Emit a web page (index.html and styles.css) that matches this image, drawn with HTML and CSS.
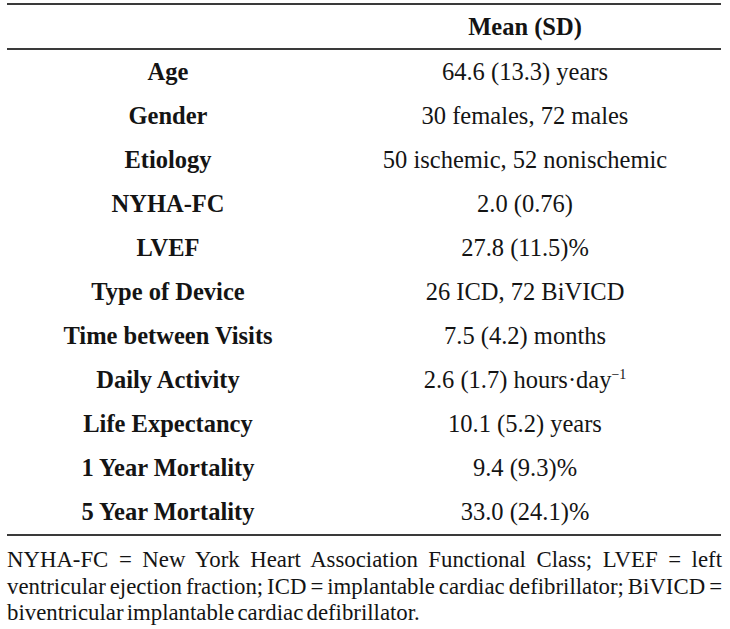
FILE: index.html
```html
<!DOCTYPE html>
<html>
<head>
<meta charset="utf-8">
<link rel="stylesheet" href="styles.css">
</head>
<body>
<div class="wrap">
<table class="data">
<thead>
<tr><th class="lab"></th><th class="val">Mean (SD)</th></tr>
</thead>
<tbody>
<tr><th class="lab">Age</th><td class="val">64.6 (13.3) years</td></tr>
<tr><th class="lab">Gender</th><td class="val">30 females, 72 males</td></tr>
<tr><th class="lab">Etiology</th><td class="val">50 ischemic, 52 nonischemic</td></tr>
<tr><th class="lab">NYHA-FC</th><td class="val">2.0 (0.76)</td></tr>
<tr><th class="lab">LVEF</th><td class="val">27.8 (11.5)%</td></tr>
<tr><th class="lab">Type of Device</th><td class="val">26 ICD, 72 BiVICD</td></tr>
<tr><th class="lab">Time between Visits</th><td class="val">7.5 (4.2) months</td></tr>
<tr><th class="lab">Daily Activity</th><td class="val">2.6 (1.7) hours·day<sup>−1</sup></td></tr>
<tr><th class="lab">Life Expectancy</th><td class="val">10.1 (5.2) years</td></tr>
<tr><th class="lab">1 Year Mortality</th><td class="val">9.4 (9.3)%</td></tr>
<tr><th class="lab">5 Year Mortality</th><td class="val">33.0 (24.1)%</td></tr>
</tbody>
</table>
<p class="note">NYHA-FC = New York Heart Association Functional Class; LVEF = left ventricular ejection fraction; ICD = implantable cardiac defibrillator; BiVICD = biventricular implantable cardiac defibrillator.</p>
</div>
</body>
</html>
```

FILE: styles.css
```css
html, body {
  margin: 0;
  padding: 0;
  background: #ffffff;
}
body {
  font-family: "Liberation Serif", "Times New Roman", serif;
  color: #141414;
}
.wrap {
  padding: 3px 8px 0 7px;
}
.data {
  width: 714px;
  border-collapse: collapse;
  border-top: 2px solid #3a3a3a;
  border-bottom: 2px solid #3a3a3a;
  font-size: 24.5px;
}
.data thead th {
  border-bottom: 2px solid #3a3a3a;
  height: 43px;
  font-weight: bold;
  padding: 0;
}
.data td, .data tbody th {
  height: 44px;
  padding: 0;
  text-align: center;
}
.lab {
  width: 322px;
  font-weight: bold;
}
.val {
  font-weight: normal;
}
.data thead .val {
  font-weight: bold;
}
sup {
  font-size: 14px;
  line-height: 0;
  vertical-align: 9px;
}
.note {
  margin: 11px 0 0 0;
  font-size: 22.8px;
  line-height: 26.7px;
  word-spacing: -2.5px;
  text-align: justify;
}
```
